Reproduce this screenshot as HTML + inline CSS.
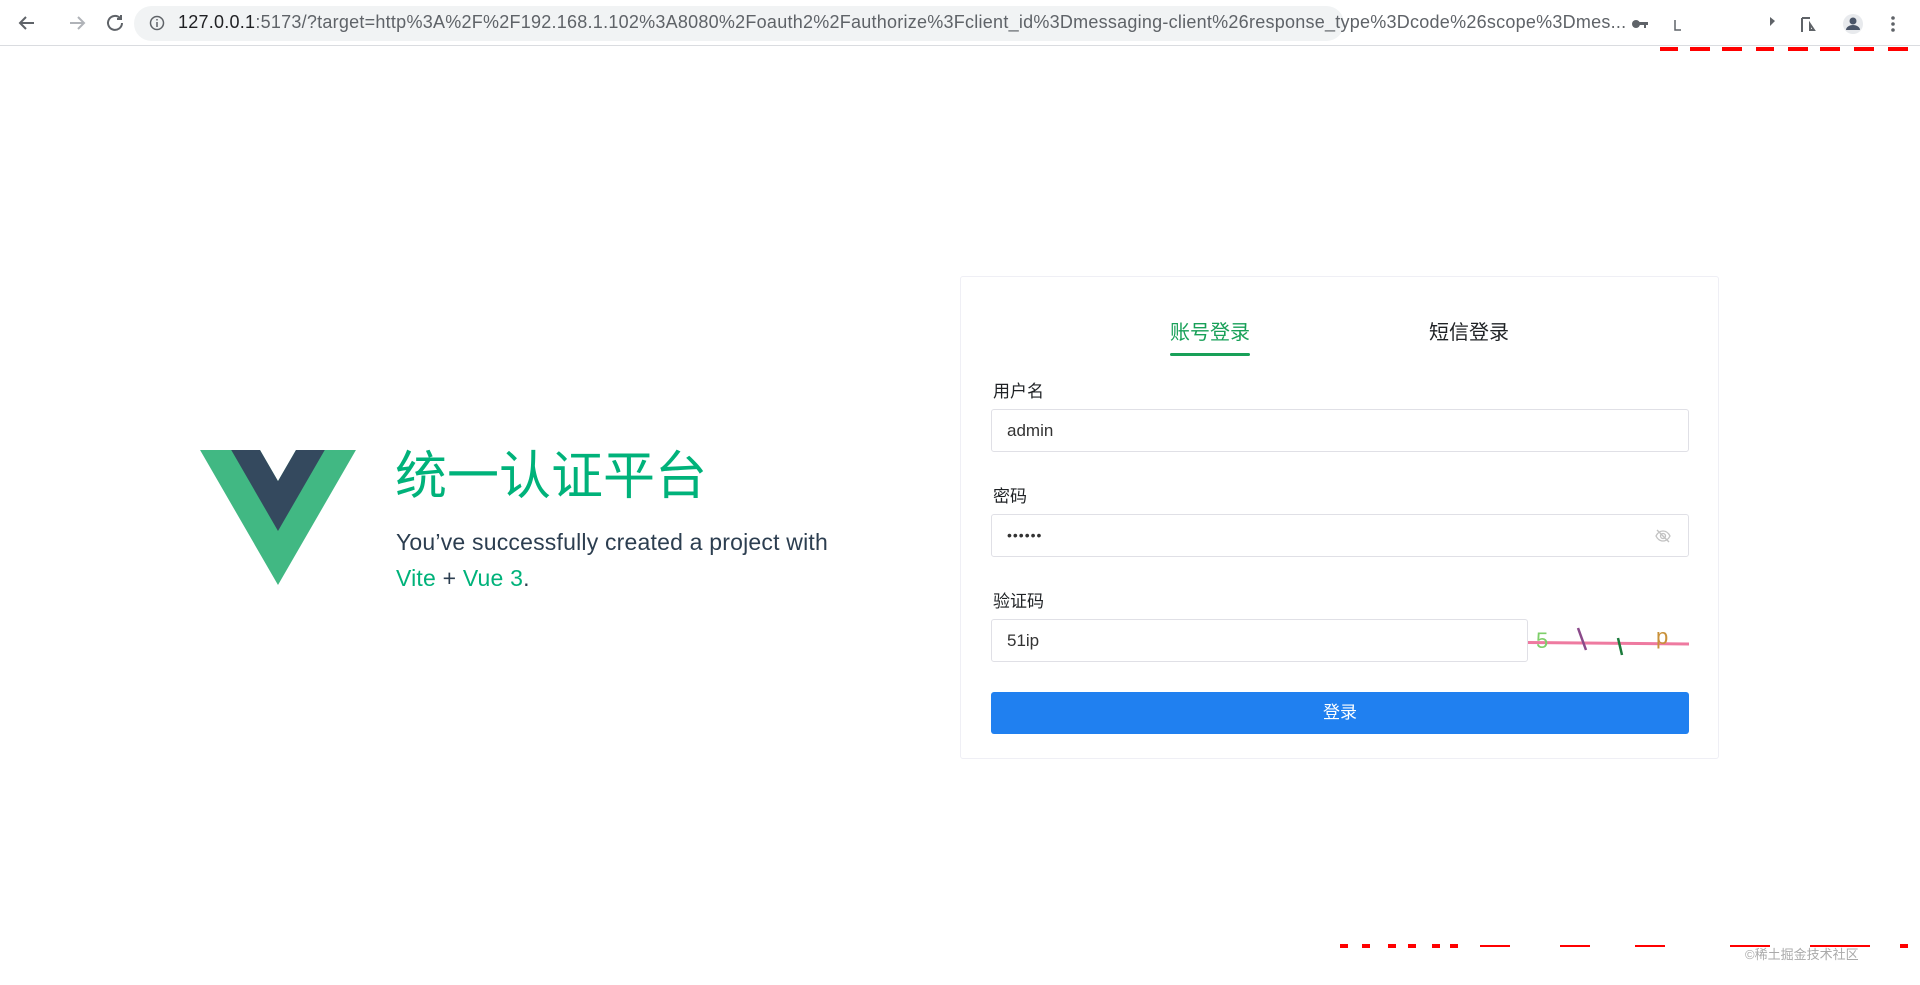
<!DOCTYPE html>
<html><head><meta charset="utf-8"><style>
*{box-sizing:border-box;margin:0;padding:0}
body{width:1920px;height:985px;background:#fff;font-family:"Liberation Sans","Noto Sans CJK SC",sans-serif;position:relative;overflow:hidden;color:#2c3e50}
.bar{position:absolute;left:0;top:0;width:1920px;height:46px;background:#fff;border-bottom:1px solid #dadce0}
.pill{position:absolute;left:134px;top:6px;width:1210px;height:35px;background:#f1f3f4;border-radius:18px}
.url{position:absolute;left:178px;top:12px;font-size:18px;letter-spacing:0.25px;color:#5f6368;white-space:nowrap;width:1450px;overflow:hidden}
.url b{font-weight:normal;color:#202124}
.ab{position:absolute}
.card{position:absolute;left:960px;top:276px;width:759px;height:483px;border:1px solid #efeff5;border-radius:3px}
.tab{position:absolute;top:316px;font-size:20px;white-space:nowrap}
.lbl{position:absolute;left:993px;font-size:17px;color:#1f2225}
.inp{position:absolute;left:991px;width:698px;height:43px;border:1px solid #e0e0e6;border-radius:3px;font-size:17px;color:#333;padding-left:15px;line-height:41px}
.btn{position:absolute;left:991px;top:692px;width:698px;height:42px;background:#2080f0;border-radius:3px;color:#fff;font-size:17px;text-align:center;line-height:42px}
</style></head><body>
<div class="bar"></div>
<div class="pill"></div>
<svg class="ab" style="left:16px;top:13px" width="110" height="20" viewBox="0 0 110 20" fill="none" stroke="#5f6368" stroke-width="2">
<path d="M18 10H4M10 4L4 10l6 6"/>
<path d="M54 10h14M62 4l6 6-6 6" stroke="#b0b3b8"/>
<path d="M106 10a7 7 0 1 1-2-5M105 2v4h-4"/>
</svg>
<svg class="ab" style="left:149px;top:15px" width="16" height="16" viewBox="0 0 16 16"><circle cx="8" cy="8" r="6.5" fill="none" stroke="#5f6368" stroke-width="1.5"/><path d="M8 7v5M8 4v1.5" stroke="#5f6368" stroke-width="1.5"/></svg>
<div class="url"><b>127.0.0.1</b>:5173/?target=http%3A%2F%2F192.168.1.102%3A8080%2Foauth2%2Fauthorize%3Fclient_id%3Dmessaging-client%26response_type%3Dcode%26scope%3Dmes...</div>
<svg class="ab" style="left:1630px;top:12px" width="280" height="24" viewBox="0 0 280 24" fill="#5f6368">
<circle cx="6" cy="12" r="4"/><rect x="8" y="10" width="10" height="3"/><rect x="14" y="12" width="2" height="4"/>
<path d="M45 8v10h6" stroke="#5f6368" fill="none" stroke-width="1.5"/>
<path d="M140 5l5 4-5 5z"/>
<path d="M172 6v14M172 6h8M180 12l4 6h-4z" stroke="#5f6368" fill="none" stroke-width="2"/>
<circle cx="223" cy="12" r="10" fill="#e8eaed"/><circle cx="223" cy="9" r="3.5" fill="#4a5568"/><path d="M216 18a7 5 0 0 1 14 0z" fill="#4a5568"/>
<circle cx="263" cy="6" r="1.8"/><circle cx="263" cy="12" r="1.8"/><circle cx="263" cy="18" r="1.8"/>
</svg>
<svg class="ab" style="left:1660px;top:47px" width="260" height="6"><g fill="#f00"><rect x="0" y="0" width="18" height="4"/><rect x="30" y="0" width="20" height="4"/><rect x="62" y="0" width="20" height="4"/><rect x="96" y="0" width="18" height="4"/><rect x="128" y="0" width="20" height="4"/><rect x="160" y="0" width="20" height="4"/><rect x="194" y="0" width="20" height="4"/><rect x="228" y="0" width="20" height="4"/></g></svg>

<svg class="ab" style="left:200px;top:450px" width="156" height="135" viewBox="0 0 261.76 226.69">
<path d="M161.096.001l-30.225 52.351L100.647.001H-.005l130.877 226.688L261.749.001z" fill="#41b883"/>
<path d="M161.096.001l-30.225 52.351L100.647.001H52.346l78.526 136.01L209.398.001z" fill="#34495e"/>
</svg>
<div class="ab" style="left:395px;top:440px;font-size:52px;color:#00b27a;white-space:nowrap;font-family:'Noto Sans CJK SC',sans-serif;line-height:64px">统一认证平台</div>
<div class="ab" style="left:396px;top:524px;font-size:23px;letter-spacing:0.2px;white-space:nowrap;line-height:36px;color:#2c3e50">You’ve successfully created a project with<br><span style="color:#00b27a">Vite</span> + <span style="color:#00b27a">Vue 3</span>.</div>

<div class="card"></div>
<div class="tab" style="left:1170px;color:#18a058">账号登录</div>
<div class="ab" style="left:1170px;top:353px;width:80px;height:3px;background:#18a058;border-radius:2px"></div>
<div class="tab" style="left:1429px;color:#1f2225">短信登录</div>

<div class="lbl" style="top:377px">用户名</div>
<div class="inp" style="top:409px">admin</div>
<div class="lbl" style="top:482px">密码</div>
<div class="inp" style="top:514px;font-size:14px;letter-spacing:1px">••••••</div>
<svg class="ab" style="left:1654px;top:527px" width="18" height="18" viewBox="0 0 18 18" fill="none" stroke="#c2c2c2" stroke-width="1.3"><path d="M2 9c2-4 5-5 7-5s5 1 7 5c-2 4-5 5-7 5s-5-1-7-5z"/><circle cx="9" cy="9" r="2.5"/><path d="M3 3l12 12"/></svg>
<div class="lbl" style="top:587px">验证码</div>
<div class="inp" style="top:619px;width:537px">51ip</div>
<svg class="ab" style="left:1528px;top:624px" width="162" height="36" viewBox="0 0 162 36">
<path d="M0 18.5L161 20" stroke="#ee7aa0" stroke-width="3"/>
<text x="8" y="24" font-size="22" fill="#7ecf6a" font-family="Liberation Sans">5</text>
<path d="M50 4l8 22" stroke="#8a4a8a" stroke-width="2.5"/>
<path d="M90 14l4 17" stroke="#1a7a3a" stroke-width="2.5"/>
<text x="128" y="20" font-size="22" fill="#c9913a" font-family="Liberation Sans">p</text>
</svg>
<div class="btn">登录</div>

<div class="ab" style="left:1745px;top:944px;font-size:13px;color:#aaa;white-space:nowrap">©稀土掘金技术社区</div>
<svg class="ab" style="left:1340px;top:943px" width="580" height="6"><g fill="#f00"><rect x="0" y="1" width="8" height="4"/><rect x="22" y="1" width="8" height="4"/><rect x="48" y="1" width="8" height="4"/><rect x="68" y="1" width="8" height="4"/><rect x="92" y="1" width="8" height="4"/><rect x="110" y="1" width="8" height="4"/><rect x="140" y="2" width="30" height="2"/><rect x="220" y="2" width="30" height="2"/><rect x="295" y="2" width="30" height="2"/><rect x="390" y="2" width="40" height="2"/><rect x="470" y="2" width="60" height="2"/><rect x="560" y="1" width="8" height="4"/></g></svg>
</body></html>
